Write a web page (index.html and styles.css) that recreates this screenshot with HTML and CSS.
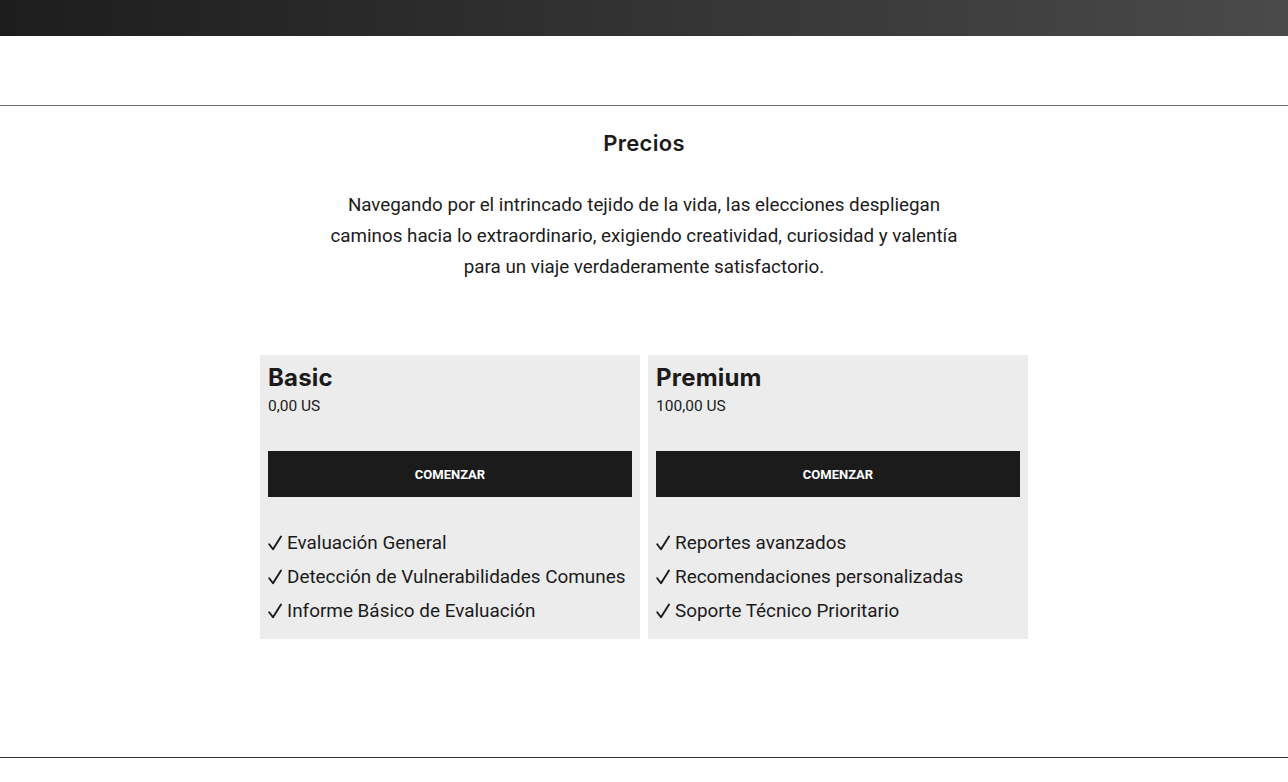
FILE: index.html
```html
<!DOCTYPE html>
<html lang="es">

<head>
    <meta charset="UTF-8">
    <meta name="viewport" content="width=device-width, initial-scale=1.0">
    <title>Precios</title>
    <link rel="stylesheet" href="styles.css">
</head>

<body>
    <div class="topbar"></div>
    <nav class="navbar"></nav>

    <main class="pricing">
        <h2 class="pricing-title">Precios</h2>
        <p class="pricing-intro">
            Navegando por el intrincado tejido de la vida, las elecciones despliegan
            caminos hacia lo extraordinario, exigiendo creatividad, curiosidad y valentía
            para un viaje verdaderamente satisfactorio.
        </p>

        <div class="plans">
            <div class="plan">
                <h3 class="plan-name">Basic</h3>
                <p class="plan-price">0,00 US</p>
                <button class="plan-button">Comenzar</button>
                <ul class="plan-features">
                    <li><svg class="check" viewBox="0 0 14 16"><path d="M1.2 9.2 L5 14.2 L13 1.5"/></svg>Evaluación General</li>
                    <li><svg class="check" viewBox="0 0 14 16"><path d="M1.2 9.2 L5 14.2 L13 1.5"/></svg>Detección de Vulnerabilidades Comunes</li>
                    <li><svg class="check" viewBox="0 0 14 16"><path d="M1.2 9.2 L5 14.2 L13 1.5"/></svg>Informe Básico de Evaluación</li>
                </ul>
            </div>
            <div class="plan">
                <h3 class="plan-name">Premium</h3>
                <p class="plan-price">100,00 US</p>
                <button class="plan-button">Comenzar</button>
                <ul class="plan-features">
                    <li><svg class="check" viewBox="0 0 14 16"><path d="M1.2 9.2 L5 14.2 L13 1.5"/></svg>Reportes avanzados</li>
                    <li><svg class="check" viewBox="0 0 14 16"><path d="M1.2 9.2 L5 14.2 L13 1.5"/></svg>Recomendaciones personalizadas</li>
                    <li><svg class="check" viewBox="0 0 14 16"><path d="M1.2 9.2 L5 14.2 L13 1.5"/></svg>Soporte Técnico Prioritario</li>
                </ul>
            </div>
        </div>
    </main>

    <footer class="footer"></footer>
</body>

</html>
```

FILE: styles.css
```css
/* Page */
body {
    font-family: Roboto, "Liberation Sans", sans-serif;
    margin: 0;
    padding: 0;
    background-color: #fff;
    color: #1b1b1b;
}

.topbar {
    height: 36px;
    background: linear-gradient(to right, #1d1d1d, #2a2a2a 30%, #3a3a3a 65%, #4a4a4a);
}

.navbar {
    height: 69px;
    border-bottom: 1px solid #6a6a6a;
}

.pricing {
    padding-top: 22px;
    text-align: center;
}

.pricing-title {
    font-family: Inter, "Open Sans", sans-serif;
    font-size: 22px;
    font-weight: 600;
    line-height: 30px;
    margin: 0;
    letter-spacing: 0.3px;
    color: #1b1b1b;
}

.pricing-intro {
    max-width: 660px;
    margin: 32px auto 0;
    font-size: 18.8px;
    line-height: 31px;
    color: #1b1b1b;
}

.plans {
    display: flex;
    justify-content: center;
    gap: 8px;
    margin-top: 72px;
    text-align: left;
}

.plan {
    width: 380px;
    box-sizing: border-box;
    padding: 8px 8px 11px;
    background-color: #ececec;
}

.plan-name {
    font-family: Inter, "Open Sans", sans-serif;
    font-size: 24px;
    font-weight: 700;
    line-height: 30px;
    margin: 0;
    letter-spacing: 0.2px;
}

.plan-price {
    font-size: 15.5px;
    line-height: 20px;
    margin: 3px 0 0;
}

.plan-button {
    display: block;
    width: 100%;
    height: 46px;
    margin-top: 35px;
    border: none;
    background-color: #1b1b1b;
    color: #fff;
    font-family: Roboto, sans-serif;
    font-size: 13px;
    font-weight: 700;
    text-transform: uppercase;
    cursor: pointer;
}

.plan-features {
    list-style: none;
    margin: 29px 0 0;
    padding: 0;
    font-size: 18.9px;
    line-height: 34px;
}

.plan-features li {
    display: flex;
    align-items: center;
}

.check {
    width: 14px;
    height: 16px;
    margin-right: 5px;
    fill: none;
    stroke: #1b1b1b;
    stroke-width: 1.9;
    stroke-linecap: round;
    stroke-linejoin: round;
}

.footer {
    margin-top: 118px;
    border-top: 1px solid #333;
    height: 24px;
}
```
